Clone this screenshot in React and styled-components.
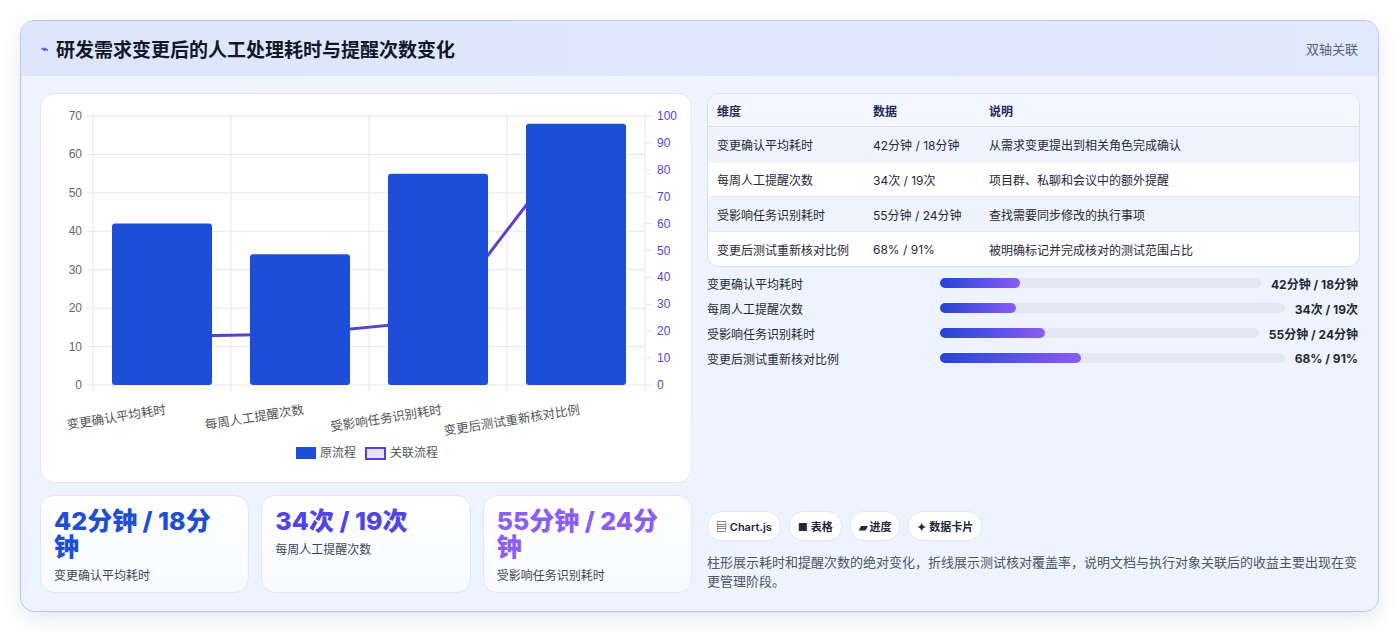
import React from 'react';
import styled, { createGlobalStyle } from 'styled-components';

const Global = createGlobalStyle`
  body { margin: 0; background: #fff; font-family: Inter, "Noto Sans CJK SC", sans-serif; }
`;

const Page = styled.div`
  padding: 20px 20px 22px 20px;
`;

const Card = styled.div`
  border: 1px solid #b9c6ef;
  border-radius: 14px;
  background: linear-gradient(180deg, #eef3fe 0%, #eef4ff 100%);
  box-shadow: 0 8px 20px rgba(60, 80, 140, 0.12);
  overflow: hidden;
`;

const Header = styled.div`
  height: 55px;
  display: flex;
  align-items: center;
  justify-content: space-between;
  padding: 0 20px;
  background: linear-gradient(90deg, #dde6fd, #e2e9fd);
`;

const Title = styled.h2`
  margin: 0;
  font-size: 19px;
  font-weight: 700;
  color: #111827;
  display: flex;
  align-items: center;
  gap: 8px;
`;

const Tag = styled.span`
  font-size: 13px;
  color: #5b6478;
`;

const Body = styled.div`
  display: grid;
  grid-template-columns: 652px 1fr;
  gap: 15px;
  padding: 17px 18px 18px 19px;
`;

const Col = styled.div`
  display: flex;
  flex-direction: column;
  gap: 12px;
`;

const Panel = styled.div`
  background: #fff;
  border: 1px solid #e1e7f5;
  border-radius: 14px;
  height: 388px;
`;

const Stats = styled.div`
  display: grid;
  grid-template-columns: repeat(3, 1fr);
  gap: 12px;
`;

const Stat = styled.div`
  background: linear-gradient(180deg, #fff, #f8faff);
  border: 1px solid #e1e7f5;
  border-radius: 14px;
  height: 98px;
  padding: 12px 13px;
  box-sizing: border-box;
`;

const StatVal = styled.div`
  font-size: 25px;
  font-weight: 800;
  line-height: 26px;
  color: ${p => p.$c};
`;

const StatLbl = styled.div`
  font-size: 12px;
  color: #3d4556;
  margin-top: 6px;
`;

const Table = styled.table`
  width: 100%;
  border-collapse: separate;
  border-spacing: 0;
  background: #fff;
  border: 1px solid #d8e0f0;
  border-radius: 12px;
  overflow: hidden;
  font-size: 12px;
  color: #1f2937;
  th { text-align: left; font-weight: 700; color: #1e2a5a; height: 32px; background: #f4f7ff; border-bottom: 1px solid #d8e0f0; }
  td { height: 34px; border-bottom: 1px solid #e6ebf5; }
  tr:nth-child(odd) td { background: #eef3fd; }
  tr:last-child td { border-bottom: none; }
  th, td { padding: 0 9px; }
`;

const Bars = styled.div`
  display: flex;
  flex-direction: column;
  gap: 7px;
  margin-top: 7px;
`;

const BarRow = styled.div`
  display: flex;
  align-items: center;
  font-size: 12px;
  color: #1f2937;
  height: 18px;
`;

const BarLbl = styled.div`
  width: 233px;
  flex-shrink: 0;
`;

const Track = styled.div`
  flex: 1;
  height: 10px;
  border-radius: 5px;
  background: #e3e8f2;
  margin-right: 10px;
`;

const Fill = styled.div`
  height: 100%;
  border-radius: 5px;
  background: linear-gradient(90deg, #2346d6, #8b5cf6);
`;

const BarVal = styled.div`
  font-weight: 700;
  margin-right: 2px;
`;

const Chips = styled.div`
  display: flex;
  gap: 8px;
  margin-top: auto;
`;

const Chip = styled.span`
  background: #fff;
  border: 1px solid #e1e7f5;
  border-radius: 14px;
  padding: 6px 8px;
  font-size: 11px;
  font-weight: 600;
  color: #1f2937;
`;

const Desc = styled.p`
  margin: 12px 0 2px;
  font-size: 13px;
  line-height: 19px;
  color: #4b5568;
`;

const bars = [42, 34, 55, 68];
const line = [18, 19, 24, 91];
const xs = [161, 299, 437, 575];
const labels = ['变更确认平均耗时', '每周人工提醒次数', '受影响任务识别耗时', '变更后测试重新核对比例'];
const yL = v => 384 - (v * 269) / 70;
const yR = v => 384 - (v * 269) / 100;

function Chart() {
  return (
    <svg width="652" height="388" viewBox="40 93 652 388" fontFamily="Liberation Sans, Noto Sans CJK SC, sans-serif">
      {[0, 10, 20, 30, 40, 50, 60, 70].map(v => (
        <g key={v}>
          <line x1="86" x2="644" y1={yL(v)} y2={yL(v)} stroke="#e5e7eb" />
          <text x="81" y={yL(v) + 4} fontSize="12" fill="#666" textAnchor="end">{v}</text>
        </g>
      ))}
      {[0, 10, 20, 30, 40, 50, 60, 70, 80, 90, 100].map(v => (
        <g key={v}>
          <line x1="644" x2="650" y1={yR(v)} y2={yR(v)} stroke="#e5e7eb" />
          <text x="656" y={yR(v) + 4} fontSize="12" fill="#5b3fd1">{v}</text>
        </g>
      ))}
      {[92, 230, 368, 506, 644].map(x => (
        <line key={x} x1={x} x2={x} y1="115" y2="390" stroke="#e5e7eb" />
      ))}
      <polyline points={xs.map((x, i) => `${x},${yR(line[i])}`).join(' ')} fill="none" stroke="#5b3fd1" strokeWidth="3" />
      {bars.map((v, i) => (
        <rect key={i} x={xs[i] - 50} y={yL(v)} width="100" height={384 - yL(v)} rx="3" fill="#1d4ed8" />
      ))}
      {labels.map((l, i) => (
        <text key={l} x={xs[i] + 3} y="404" fontSize="12.5" fill="#555" textAnchor="end" transform={`rotate(-9 ${xs[i] + 3} 404)`} dominantBaseline="hanging">{l}</text>
      ))}
      <rect x="295" y="446" width="20" height="12" fill="#1d4ed8" />
      <text x="319" y="456" fontSize="12" fill="#555">原流程</text>
      <rect x="365" y="447" width="19" height="11" fill="#e6e2fb" stroke="#5b3fd1" strokeWidth="2" />
      <text x="389" y="456" fontSize="12" fill="#555">关联流程</text>
    </svg>
  );
}

const rows = [
  ['变更确认平均耗时', '42分钟 / 18分钟', '从需求变更提出到相关角色完成确认', 25, 940],
  ['每周人工提醒次数', '34次 / 19次', '项目群、私聊和会议中的额外提醒', 22],
  ['受影响任务识别耗时', '55分钟 / 24分钟', '查找需要同步修改的执行事项', 33],
  ['变更后测试重新核对比例', '68% / 91%', '被明确标记并完成核对的测试范围占比', 41],
];

export default function App() {
  return (
    <Page>
      <Global />
      <Card>
        <Header>
          <Title><span style={{ color: '#3b5bdb', fontSize: 12 }}>⌁</span>研发需求变更后的人工处理耗时与提醒次数变化</Title>
          <Tag>双轴关联</Tag>
        </Header>
        <Body>
          <Col>
            <Panel><Chart /></Panel>
            <Stats>
              <Stat><StatVal $c="#1d4ed8">42分钟 / 18分钟</StatVal><StatLbl>变更确认平均耗时</StatLbl></Stat>
              <Stat><StatVal $c="#4f46e5">34次 / 19次</StatVal><StatLbl>每周人工提醒次数</StatLbl></Stat>
              <Stat><StatVal $c="#8b5cf6">55分钟 / 24分钟</StatVal><StatLbl>受影响任务识别耗时</StatLbl></Stat>
            </Stats>
          </Col>
          <Col style={{ gap: 0 }}>
            <Table>
              <thead><tr><th style={{ width: 138 }}>维度</th><th style={{ width: 98 }}>数据</th><th>说明</th></tr></thead>
              <tbody>
                {rows.map(r => (
                  <tr key={r[0]}><td>{r[0]}</td><td>{r[1]}</td><td>{r[2]}</td></tr>
                ))}
              </tbody>
            </Table>
            <Bars>
              {rows.map(r => (
                <BarRow key={r[0]}>
                  <BarLbl>{r[0]}</BarLbl>
                  <Track><Fill style={{ width: `${r[3]}%` }} /></Track>
                  <BarVal>{r[1]}</BarVal>
                </BarRow>
              ))}
            </Bars>
            <Chips>
              <Chip>▤ Chart.js</Chip>
              <Chip>■ 表格</Chip>
              <Chip>▰ 进度</Chip>
              <Chip>✦ 数据卡片</Chip>
            </Chips>
            <Desc>柱形展示耗时和提醒次数的绝对变化，折线展示测试核对覆盖率，说明文档与执行对象关联后的收益主要出现在变更管理阶段。</Desc>
          </Col>
        </Body>
      </Card>
    </Page>
  );
}
